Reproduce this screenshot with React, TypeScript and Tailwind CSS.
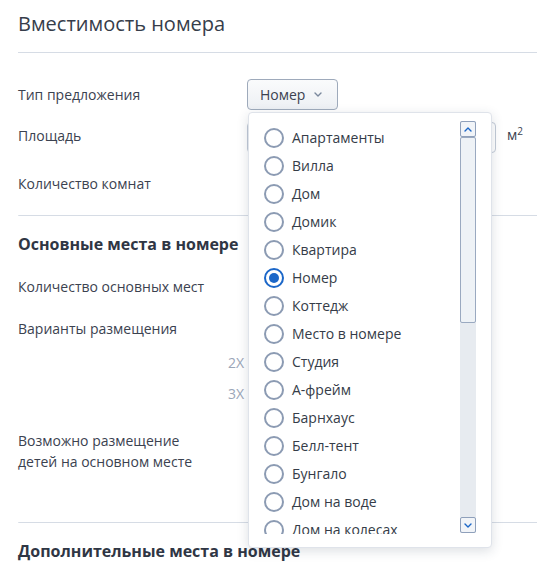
import React from 'react';

const options = [
  'Апартаменты',
  'Вилла',
  'Дом',
  'Домик',
  'Квартира',
  'Номер',
  'Коттедж',
  'Место в номере',
  'Студия',
  'А-фрейм',
  'Барнхаус',
  'Белл-тент',
  'Бунгало',
  'Дом на воде',
  'Дом на колесах',
  'Глэмпинг',
];

const Chevron: React.FC<{ up?: boolean; className?: string }> = ({ up, className }) => (
  <svg width="8" height="5" viewBox="0 0 8 5" className={className}>
    <path
      d={up ? 'M1 4L4 1L7 4' : 'M1 1L4 4L7 1'}
      fill="none"
      stroke="currentColor"
      strokeWidth="1.4"
      strokeLinecap="round"
      strokeLinejoin="round"
    />
  </svg>
);

const Radio: React.FC<{ checked?: boolean }> = ({ checked }) => (
  <span
    className={
      checked
        ? 'flex h-5 w-5 items-center justify-center rounded-full border-2 border-[#1c67c8]'
        : 'flex h-5 w-5 items-center justify-center rounded-full border-2 border-[#8c9bb3]'
    }
  >
    {checked && <span className="h-2.5 w-2.5 rounded-full bg-[#1c67c8]" />}
  </span>
);

export default function App() {
  const selected = 'Номер';

  return (
    <div className="relative h-[571px] w-[537px] overflow-hidden bg-white pl-[18px] font-['Open_Sans',sans-serif] text-sm text-[#3b4250]">
      {/* Заголовок */}
      <div className="border-b border-[#d6dce5] pt-[10px] pb-[14px]">
        <h1 className="text-xl leading-7 text-[#363d4a]">Вместимость номера</h1>
      </div>

      {/* Тип предложения */}
      <div className="mt-[26px] flex h-[31px] items-center">
        <div className="w-[229px]">Тип предложения</div>
        <button className="flex h-[31px] w-[91px] items-center gap-[9px] rounded-[4px] border border-[#9eaabb] bg-gradient-to-b from-[#fafbfc] to-[#edf0f4] pl-3 text-[#3b4250]">
          Номер
          <Chevron className="text-[#7a889d]" />
        </button>
      </div>

      {/* Площадь */}
      <div className="mt-[12px] flex h-[32px] items-start">
        <div className="w-[229px] pt-1 leading-5">Площадь</div>
        <div className="h-[31px] w-[249px] rounded-[4px] border border-[#c3cbd7] bg-white" />
        <div className="ml-[11px] pt-[3px] leading-5">
          м<sup className="text-[10px]">2</sup>
        </div>
      </div>

      {/* Количество комнат */}
      <div className="mt-[14px] flex h-[32px] items-center">
        <div className="w-[229px]">Количество комнат</div>
      </div>

      <div className="mt-[15px] rounded-tl-[3px] border-t border-[#d6dce5]" />

      {/* Основные места */}
      <h2 className="mt-[16px] text-base leading-6 font-bold text-[#2f3644]">Основные места в номере</h2>
      <div className="mt-[21px] leading-5">Количество основных мест</div>
      <div className="mt-[22px] leading-5">Варианты размещения</div>
      <div className="mt-[14px] w-[226px] text-right leading-5 text-[#9ba6b8]">2Х</div>
      <div className="mt-[11px] w-[226px] text-right leading-5 text-[#9ba6b8]">3Х</div>
      <div className="mt-[26px] leading-[21px]">
        Возможно размещение
        <br />
        детей на основном месте
      </div>

      <div className="mt-[50px] rounded-tl-[3px] border-t border-[#d6dce5]" />

      <h2 className="mt-[16px] text-base leading-6 font-bold text-[#2f3644]">Дополнительные места в номере</h2>

      {/* Выпадающий список */}
      <div className="absolute top-[112px] left-[248px] flex h-[436px] w-[244px] items-start rounded-[4px] border border-[#dfe3ea] bg-white pt-[8px] shadow-[0_3px_12px_rgba(40,55,80,0.16)]">
        <div className="h-[413px] flex-1 overflow-hidden pt-[3px]">
          {options.map((o) => (
            <div key={o} className="flex h-7 items-center gap-2 pl-[15px] text-[#353c48]">
              <Radio checked={o === selected} />
              <span>{o}</span>
            </div>
          ))}
        </div>
        <div className="mr-[15px] flex h-[412px] w-4 flex-col bg-[#e7ebf0]">
          <div className="flex h-4 items-center justify-center rounded-[2px] border border-[#8fa0bb] bg-[#f1f4f8] text-[#1c67c8]">
            <Chevron up />
          </div>
          <div className="h-[186px] rounded-[2px] border border-[#9aa9c0] bg-[#eef2f6]" />
          <div className="flex-1" />
          <div className="flex h-4 items-center justify-center rounded-[2px] border border-[#8fa0bb] bg-[#f1f4f8] text-[#1c67c8]">
            <Chevron />
          </div>
        </div>
      </div>
    </div>
  );
}
